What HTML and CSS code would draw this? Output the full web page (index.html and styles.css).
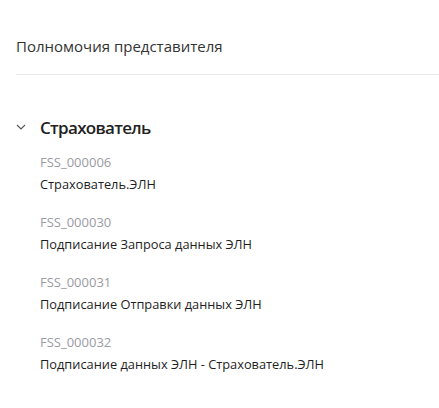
FILE: index.html
```html
<!DOCTYPE html>
<html lang="ru">
<head>
  <meta charset="UTF-8" />
  <title>Полномочия представителя</title>
  <link rel="stylesheet" href="styles.css">
</head>
<body>
  <div class="page">
    <h2 class="page-title">Полномочия представителя</h2>

    <div class="group">
      <div class="group-head">
        <svg class="chevron" width="10" height="6" viewBox="0 0 10 6">
          <path d="M1 1 L5 5 L9 1" fill="none" stroke="#555" stroke-width="1.1"/>
        </svg>
        <span class="group-name">Страхователь</span>
      </div>
      <ul class="perm-list">
        <li class="perm">
          <div class="perm-code">FSS_000006</div>
          <div class="perm-name">Страхователь.ЭЛН</div>
        </li>
        <li class="perm">
          <div class="perm-code">FSS_000030</div>
          <div class="perm-name">Подписание Запроса данных ЭЛН</div>
        </li>
        <li class="perm">
          <div class="perm-code">FSS_000031</div>
          <div class="perm-name">Подписание Отправки данных ЭЛН</div>
        </li>
        <li class="perm">
          <div class="perm-code">FSS_000032</div>
          <div class="perm-name">Подписание данных ЭЛН - Страхователь.ЭЛН</div>
        </li>
      </ul>
    </div>
  </div>
</body>
</html>
```

FILE: styles.css
```css
body {
  margin: 0;
  padding: 0;
  background: #fff;
  font-family: "Open Sans", Arial, sans-serif;
  color: #222;
}
.page {
  padding: 34px 0 0 16px;
}
.page-title {
  margin: 0;
  font-size: 15px;
  font-weight: 400;
  color: #333;
  line-height: 24px;
  padding-bottom: 16px;
  border-bottom: 1px solid #ebebeb;
}
.group {
  margin-top: 40px;
}
.group-head {
  display: flex;
  align-items: center;
  height: 24px;
}
.chevron {
  width: 10px;
  margin-right: 14px;
}
.group-name {
  font-size: 17px;
  font-weight: 600;
  letter-spacing: -0.7px;
  color: #222;
}
.perm-list {
  list-style: none;
  margin: 12px 0 0 24px;
  padding: 0;
}
.perm {
  margin-bottom: 16px;
}
.perm-code {
  font-size: 13px;
  color: #9b9ba3;
  line-height: 22px;
}
.perm-name {
  font-size: 12.8px;
  color: #1e1e1e;
  line-height: 22px;
}
```
